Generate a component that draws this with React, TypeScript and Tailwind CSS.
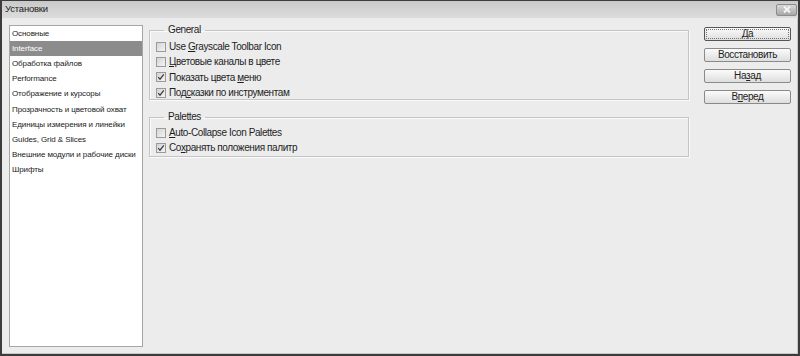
const sections = [
  'Основные',
  'Interface',
  'Обработка файлов',
  'Performance',
  'Отображение и курсоры',
  'Прозрачность и цветовой охват',
  'Единицы измерения и линейки',
  'Guides, Grid & Slices',
  'Внешние модули и рабочие диски',
  'Шрифты',
]

function Check({ checked }: { checked?: boolean }) {
  return (
    <span className="w-[10px] h-[10px] border border-[#9a9a9a] bg-gradient-to-br from-[#d4d4d4] to-[#f4f4f4] flex items-center justify-center mr-[3px] shrink-0">
      {checked && (
        <svg width="8" height="8" viewBox="0 0 8 8">
          <path d="M1.2 4.2 L3 6.2 L6.8 1.4" fill="none" stroke="#3a3a3a" strokeWidth="1.2" />
        </svg>
      )}
    </span>
  )
}

function Option({ label, checked }: { label: React.ReactNode; checked?: boolean }) {
  return (
    <div className="h-[15.3px] flex items-center">
      <Check checked={checked} />
      <span>{label}</span>
    </div>
  )
}

function Group({ title, children, className }: { title: string; children: React.ReactNode; className?: string }) {
  return (
    <fieldset className={`border border-[#c4c4c4] shadow-[inset_1px_1px_0_#fafafa,1px_1px_0_#fafafa] pl-[6px] ${className ?? ''}`}>
      <legend className="ml-[8px] px-[4px] leading-[12px] text-[#222]">{title}</legend>
      {children}
    </fieldset>
  )
}

function Btn({ children, primary }: { children: React.ReactNode; primary?: boolean }) {
  return (
    <button
      className={`h-[14px] w-[87px] rounded-[2px] bg-gradient-to-b from-[#fbfbfb] to-[#dedede] text-[#222] leading-[12px] flex items-center justify-center ${
        primary ? 'border border-[#555] outline outline-1 outline-dotted outline-offset-[-3px] outline-[#777]' : 'border border-[#8a8a8a]'
      }`}
    >
      {children}
    </button>
  )
}

export default function App() {
  return (
    <div className="w-[800px] h-[356px] bg-[#ececec] border-x-[2px] border-b-[2px] border-t border-[#3c3c3c] flex flex-col font-['Liberation_Sans',Arial,sans-serif] text-[10px] tracking-[-0.4px] text-[#1e1e1e] overflow-hidden">
      {/* title bar */}
      <div className="h-[17px] shrink-0 bg-gradient-to-b from-[#c9c9c9] to-[#dcdcdc] flex items-center justify-between pl-[3px] pr-[1px]">
        <span className="text-[9.5px] tracking-[-0.2px] text-[#202020]">Установки</span>
        <span className="w-[21px] h-[12px] rounded-[2px] border border-[#8c8c8c] bg-gradient-to-b from-[#d8d8d8] to-[#a8a8a8] flex items-center justify-center">
          <svg width="8" height="7" viewBox="0 0 8 7">
            <path d="M1 0.5 L7 6.5 M7 0.5 L1 6.5" stroke="#f6f6f6" strokeWidth="1.8" />
          </svg>
        </span>
      </div>

      <div className="flex-1 flex border-r border-b border-[#c8c8c8]">
        {/* sections list */}
        <div className="ml-[7px] mt-[7px] mb-[6px] w-[134px] bg-white border border-[#a6a6a6] text-[8px] tracking-[-0.1px] text-[#222]">
          {sections.map((s, i) => (
            <div
              key={s}
              className={`h-[15.2px] flex items-center pl-[2px] ${i === 1 ? 'bg-[#8c8c8c] text-white' : ''}`}
            >
              {s}
            </div>
          ))}
        </div>

        {/* options */}
        <div className="ml-[6px] mt-[6px] w-[540px] flex flex-col">
          <Group title="General" className="h-[76px] pt-[3px]">
            <Option label={<>Use <u>G</u>rayscale Toolbar Icon</>} />
            <Option label={<><u>Ц</u>ветовые каналы в цвете</>} />
            <Option checked label={<>Показать цвета <u>м</u>еню</>} />
            <Option checked label={<>Под<u>с</u>казки по инструментам</>} />
          </Group>
          <Group title="Palettes" className="mt-[11px] h-[46px] pt-[2px]">
            <Option label={<><u>A</u>uto-Collapse Icon Palettes</>} />
            <Option checked label={<>Со<u>х</u>ранять положения палитр</>} />
          </Group>
        </div>

        {/* buttons */}
        <div className="ml-[15px] mt-[9px] flex flex-col gap-[7px]">
          <Btn primary><u>Д</u>а</Btn>
          <Btn>Восстановить</Btn>
          <Btn>На<u>з</u>ад</Btn>
          <Btn>В<u>п</u>еред</Btn>
        </div>
      </div>
    </div>
  )
}
